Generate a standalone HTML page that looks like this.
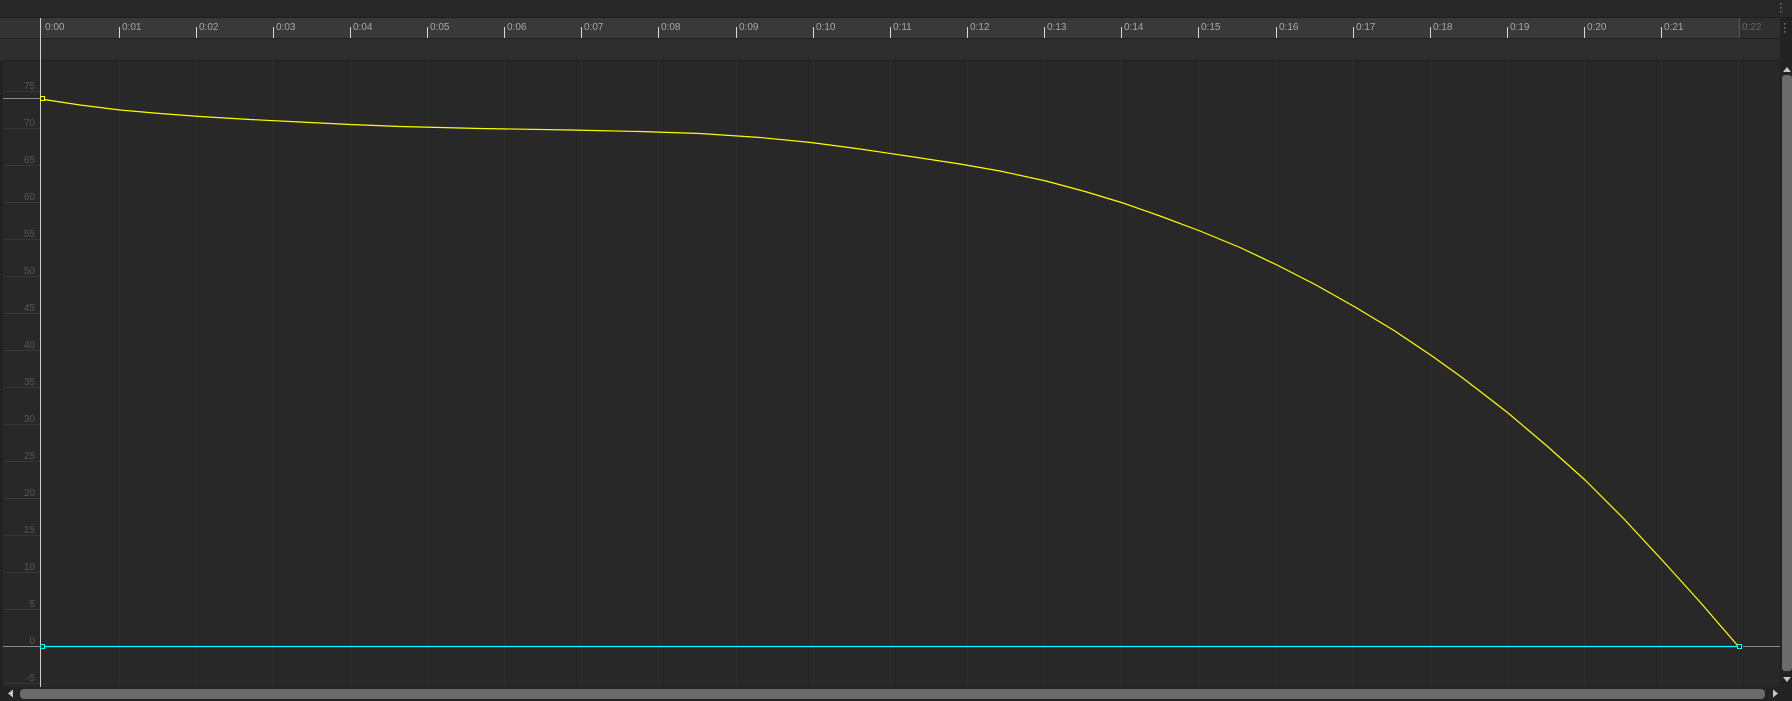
<!DOCTYPE html>
<html><head><style>
html,body{margin:0;padding:0;width:1792px;height:701px;overflow:hidden;background:#282828;font-family:"Liberation Sans",sans-serif;}
.abs{position:absolute}
.tl{position:absolute;top:22px;font-size:10px;color:#a8a8a8}
.vl{position:absolute;right:1757px;font-size:10px;color:#575757;text-align:right}
</style></head><body>
<div class="abs" style="left:0;top:0;width:1792px;height:17px;background:#282828;border-bottom:1px solid #1e1e1e"></div>
<div class="abs" style="left:1779px;top:2px;font-size:11px;color:#b0b0b0;line-height:4px">·<br>·<br>·</div>
<div class="abs" style="left:0;top:18px;width:1780px;height:20px;background:#393939"></div>
<div class="abs" style="left:0;top:18px;width:40px;height:20px;background:#333"></div>
<div class="abs" style="left:1739px;top:18px;width:41px;height:20px;background:#2f2f2f"></div>
<div class="abs" style="left:0;top:38px;width:1780px;height:21px;background:#2e2e2e;border-top:1px solid #222;border-bottom:1px solid #1e1e1e"></div>
<div class="abs" style="left:1780px;top:18px;width:12px;height:683px;background:#232323"></div>
<div class="abs" style="left:1783px;top:22px;font-size:11px;color:#b0b0b0;line-height:4px">·<br>·<br>·</div>
<div class="abs" style="left:0;top:60px;width:3px;height:627px;background:#222"></div>
<svg class="abs" style="left:0;top:0" width="1792" height="701">
<g stroke="#2f2f2f" stroke-width="1">
<line x1="119.5" y1="60" x2="119.5" y2="687"/><line x1="196.5" y1="60" x2="196.5" y2="687"/><line x1="273.5" y1="60" x2="273.5" y2="687"/><line x1="350.5" y1="60" x2="350.5" y2="687"/><line x1="427.5" y1="60" x2="427.5" y2="687"/><line x1="504.5" y1="60" x2="504.5" y2="687"/><line x1="581.5" y1="60" x2="581.5" y2="687"/><line x1="658.5" y1="60" x2="658.5" y2="687"/><line x1="736.5" y1="60" x2="736.5" y2="687"/><line x1="813.5" y1="60" x2="813.5" y2="687"/><line x1="890.5" y1="60" x2="890.5" y2="687"/><line x1="967.5" y1="60" x2="967.5" y2="687"/><line x1="1044.5" y1="60" x2="1044.5" y2="687"/><line x1="1121.5" y1="60" x2="1121.5" y2="687"/><line x1="1198.5" y1="60" x2="1198.5" y2="687"/><line x1="1276.5" y1="60" x2="1276.5" y2="687"/><line x1="1353.5" y1="60" x2="1353.5" y2="687"/><line x1="1430.5" y1="60" x2="1430.5" y2="687"/><line x1="1507.5" y1="60" x2="1507.5" y2="687"/><line x1="1584.5" y1="60" x2="1584.5" y2="687"/><line x1="1661.5" y1="60" x2="1661.5" y2="687"/><line x1="1738.5" y1="60" x2="1738.5" y2="687"/>
</g>
<g stroke="#383838"><line x1="3" y1="91.5" x2="40" y2="91.5"/><line x1="3" y1="128.5" x2="40" y2="128.5"/><line x1="3" y1="165.5" x2="40" y2="165.5"/><line x1="3" y1="202.5" x2="40" y2="202.5"/><line x1="3" y1="239.5" x2="40" y2="239.5"/><line x1="3" y1="276.5" x2="40" y2="276.5"/><line x1="3" y1="313.5" x2="40" y2="313.5"/><line x1="3" y1="350.5" x2="40" y2="350.5"/><line x1="3" y1="387.5" x2="40" y2="387.5"/><line x1="3" y1="424.5" x2="40" y2="424.5"/><line x1="3" y1="461.5" x2="40" y2="461.5"/><line x1="3" y1="498.5" x2="40" y2="498.5"/><line x1="3" y1="535.5" x2="40" y2="535.5"/><line x1="3" y1="572.5" x2="40" y2="572.5"/><line x1="3" y1="609.5" x2="40" y2="609.5"/><line x1="3" y1="683.5" x2="40" y2="683.5"/></g>
<g stroke="#d8d8d8"><line x1="119.5" y1="27" x2="119.5" y2="38"/><line x1="196.5" y1="27" x2="196.5" y2="38"/><line x1="273.5" y1="27" x2="273.5" y2="38"/><line x1="350.5" y1="27" x2="350.5" y2="38"/><line x1="427.5" y1="27" x2="427.5" y2="38"/><line x1="504.5" y1="27" x2="504.5" y2="38"/><line x1="581.5" y1="27" x2="581.5" y2="38"/><line x1="658.5" y1="27" x2="658.5" y2="38"/><line x1="736.5" y1="27" x2="736.5" y2="38"/><line x1="813.5" y1="27" x2="813.5" y2="38"/><line x1="890.5" y1="27" x2="890.5" y2="38"/><line x1="967.5" y1="27" x2="967.5" y2="38"/><line x1="1044.5" y1="27" x2="1044.5" y2="38"/><line x1="1121.5" y1="27" x2="1121.5" y2="38"/><line x1="1198.5" y1="27" x2="1198.5" y2="38"/><line x1="1276.5" y1="27" x2="1276.5" y2="38"/><line x1="1353.5" y1="27" x2="1353.5" y2="38"/><line x1="1430.5" y1="27" x2="1430.5" y2="38"/><line x1="1507.5" y1="27" x2="1507.5" y2="38"/><line x1="1584.5" y1="27" x2="1584.5" y2="38"/><line x1="1661.5" y1="27" x2="1661.5" y2="38"/></g>
<line x1="1739.5" y1="18" x2="1739.5" y2="38" stroke="#555"/>
<line x1="3" y1="98.5" x2="40" y2="98.5" stroke="#8a8a8a"/>
<line x1="3" y1="646.5" x2="40" y2="646.5" stroke="#8a8a8a"/>
<line x1="1743" y1="646.5" x2="1780" y2="646.5" stroke="#8a8a8a"/>
<line x1="44" y1="646.5" x2="1737" y2="646.5" stroke="#00ffff" stroke-width="1.2"/>
<polyline points="44,99.5 80,105 120,110 160,113.5 200,116.5 250,119.5 300,122 350,124.5 400,126.5 480,128.5 571,130 640,131.5 700,133.5 760,137.5 811,142.5 860,149 914,157 960,164 1000,171 1046,181 1085,191.5 1123,203 1160,216 1200,231 1240,247.5 1277,265 1316,285 1355,307 1394,330.5 1432,356 1462,377.5 1490,399 1508,413 1547,446 1585,480 1624,519 1662,560 1700,602 1738,646" fill="none" stroke="#ffff00" stroke-width="1.2" stroke-linejoin="round"/>
<line x1="40.5" y1="18" x2="40.5" y2="687" stroke="#d0d0d0"/>
<rect x="40.5" y="96.5" width="4" height="4" fill="#262626" stroke="#ffff00"/>
<rect x="40.5" y="644.5" width="4" height="4" fill="#262626" stroke="#00ffff"/>
<rect x="1737.5" y="644.5" width="4" height="4" fill="#262626" stroke="#00ffff"/>
<rect x="1782" y="75" width="10" height="596" rx="3" fill="#6b6b6b"/>
<polygon points="1783,72 1787,67 1791,72" fill="#c8c8c8"/>
<polygon points="1783,677 1787,682 1791,677" fill="#c8c8c8"/>
<rect x="0" y="687" width="1780" height="14" fill="#232323"/>
<rect x="20" y="689" width="1745" height="10" rx="4" fill="#6b6b6b"/>
<polygon points="8,693.5 13,689.5 13,697.5" fill="#c8c8c8"/>
<polygon points="1778,693.5 1773,689.5 1773,697.5" fill="#c8c8c8"/>
</svg>
<div class="tl" style="left:45px">0:00</div><div class="tl" style="left:122px">0:01</div><div class="tl" style="left:199px">0:02</div><div class="tl" style="left:276px">0:03</div><div class="tl" style="left:353px">0:04</div><div class="tl" style="left:430px">0:05</div><div class="tl" style="left:507px">0:06</div><div class="tl" style="left:584px">0:07</div><div class="tl" style="left:661px">0:08</div><div class="tl" style="left:739px">0:09</div><div class="tl" style="left:816px">0:10</div><div class="tl" style="left:893px">0:11</div><div class="tl" style="left:970px">0:12</div><div class="tl" style="left:1047px">0:13</div><div class="tl" style="left:1124px">0:14</div><div class="tl" style="left:1201px">0:15</div><div class="tl" style="left:1279px">0:16</div><div class="tl" style="left:1356px">0:17</div><div class="tl" style="left:1433px">0:18</div><div class="tl" style="left:1510px">0:19</div><div class="tl" style="left:1587px">0:20</div><div class="tl" style="left:1664px">0:21</div><div class="tl" style="left:1742px;color:#666">0:22</div>
<div class="vl" style="top:81px">75</div><div class="vl" style="top:118px">70</div><div class="vl" style="top:155px">65</div><div class="vl" style="top:192px">60</div><div class="vl" style="top:229px">55</div><div class="vl" style="top:266px">50</div><div class="vl" style="top:303px">45</div><div class="vl" style="top:340px">40</div><div class="vl" style="top:377px">35</div><div class="vl" style="top:414px">30</div><div class="vl" style="top:451px">25</div><div class="vl" style="top:488px">20</div><div class="vl" style="top:525px">15</div><div class="vl" style="top:562px">10</div><div class="vl" style="top:599px">5</div><div class="vl" style="top:636px">0</div><div class="vl" style="top:673px">-5</div>
</body></html>
